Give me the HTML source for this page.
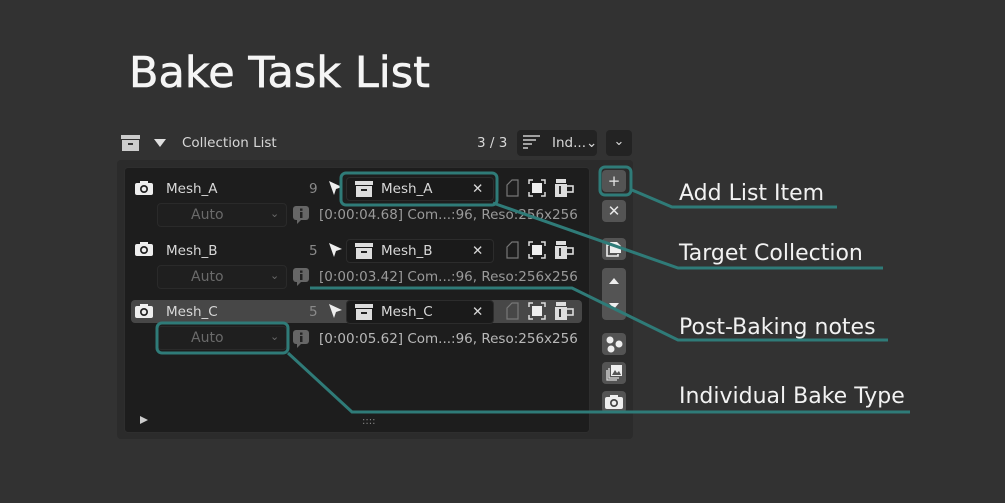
<!DOCTYPE html>
<html><head><meta charset="utf-8"><style>
*{margin:0;padding:0;box-sizing:border-box}
body{width:1005px;height:503px;background:#323232;position:relative;overflow:hidden;font-family:"DejaVu Sans","Liberation Sans",sans-serif;color:#ddd}
.a{position:absolute}
.t{font-size:13.5px;color:#d8d8d8;white-space:nowrap}
.g{color:#8a8a8a}
.btn{position:absolute;background:#545454;border-radius:4px;width:24px;height:22px;left:602px;color:#e6e6e6;font-size:15px;text-align:center;line-height:22px}
.fld{position:absolute;background:#1a1a1a;border-radius:4px;border:1px solid #2c2c2c}
.drop{position:absolute;border:1px solid #2a2a2a;border-radius:4px;background:#1f1f1f;width:130px;height:24px;left:157px;font-size:14px;color:#6a6a6a}
.ann{position:absolute;font-size:22px;color:#f2f2f2;white-space:nowrap;font-family:"DejaVu Sans",sans-serif}
</style></head><body>
<div class="a" style="left:129px;top:48px;font-size:43px;color:#f5f5f5;font-family:'DejaVu Sans',sans-serif;font-weight:500;-webkit-text-stroke:0.6px #f5f5f5">Bake Task List</div>

<div class="a" style="left:117px;top:160px;width:516px;height:279px;background:#2b2b2b;border-radius:4px"></div>
<div class="a" style="left:124px;top:167px;width:466px;height:266px;background:#1d1d1d;border-radius:4px;border:1px solid #2e2e2e"></div>

<!-- header -->
<svg class="a" style="left:120px;top:134px" width="22" height="18"><rect x="1" y="1" width="19" height="4" fill="#ccc"/><rect x="2" y="6" width="17" height="11" fill="#ccc"/><rect x="8" y="9" width="5" height="2" fill="#333"/></svg>
<svg class="a" style="left:153px;top:138px" width="14" height="10"><path d="M1 1H13L7 9Z" fill="#e0e0e0"/></svg>
<div class="a t" style="left:182px;top:135px">Collection List</div>
<div class="a t" style="left:477px;top:135px">3 / 3</div>
<div class="a" style="left:517px;top:130px;width:80px;height:26px;background:#232323;border-radius:4px"></div>
<svg class="a" style="left:522px;top:134px" width="22" height="18"><path d="M1 2H18M1 6H14M1 10H10M1 14H6" stroke="#ccc" stroke-width="1.5"/></svg>
<div class="a t" style="left:552px;top:135px">Ind...⌄</div>
<div class="a" style="left:606px;top:130px;width:26px;height:26px;background:#232323;border-radius:4px;color:#ddd;text-align:center;line-height:24px;font-size:13px">⌄</div>

<!-- rows -->
<div class="a" style="left:131px;top:300px;width:451px;height:23px;background:#474747;border-radius:4px"></div>

<svg class="a" style="left:135px;top:180px" width="20" height="16"><rect x="0" y="3" width="18" height="12" rx="2" fill="#eee"/><rect x="5" y="1" width="8" height="3" fill="#eee"/><circle cx="9" cy="9" r="4" fill="#222"/><circle cx="9" cy="9" r="2.3" fill="#eee"/></svg>
<div class="a t" style="left:166px;top:181px">Mesh_A</div>
<div class="a t g" style="left:309px;top:181px">9</div>
<div class="a t" style="left:166px;top:243px">Mesh_B</div>
<div class="a t g" style="left:309px;top:243px">5</div>
<div class="a t" style="left:166px;top:304px">Mesh_C</div>
<div class="a t g" style="left:309px;top:304px">5</div>

<div class="fld" style="left:346px;top:177px;width:148px;height:24px"></div>
<div class="fld" style="left:346px;top:239px;width:148px;height:24px"></div>
<div class="fld" style="left:346px;top:300px;width:148px;height:24px"></div>
<div class="a t" style="left:381px;top:181px">Mesh_A</div>
<div class="a t" style="left:381px;top:243px">Mesh_B</div>
<div class="a t" style="left:381px;top:304px">Mesh_C</div>
<div class="a t" style="left:472px;top:181px">✕</div>
<div class="a t" style="left:472px;top:243px">✕</div>
<div class="a t" style="left:472px;top:304px">✕</div>

<div class="drop" style="top:203px"><span class="a" style="left:33px;top:3px">Auto</span><span class="a" style="left:112px;top:3px;font-size:11px">⌄</span></div>
<div class="drop" style="top:265px"><span class="a" style="left:33px;top:3px">Auto</span><span class="a" style="left:112px;top:3px;font-size:11px">⌄</span></div>
<div class="drop" style="top:326px"><span class="a" style="left:33px;top:3px">Auto</span><span class="a" style="left:112px;top:3px;font-size:11px">⌄</span></div>

<div class="a t g" style="left:319px;top:207px;color:#9a9a9a">[0:00:04.68] Com...:96, Reso:256x256</div>
<div class="a t g" style="left:319px;top:269px;color:#9a9a9a">[0:00:03.42] Com...:96, Reso:256x256</div>
<div class="a t" style="left:319px;top:331px;color:#b8b8b8">[0:00:05.62] Com...:96, Reso:256x256</div>

<svg class="a" style="left:0;top:0" width="1005" height="503">
<defs>
<g id="cam"><rect x="0" y="3" width="18" height="12" rx="2" fill="#eee"/><rect x="5" y="1" width="8" height="3" fill="#eee"/><circle cx="9" cy="9" r="4" fill="#222"/><circle cx="9" cy="9" r="2.3" fill="#eee"/></g>
<g id="box"><rect x="0" y="0" width="18" height="4" fill="#ddd"/><rect x="1" y="5" width="16" height="11" fill="#ddd"/><rect x="6" y="8" width="6" height="2" fill="#222"/></g>
<g id="arr"><path d="M0 0L13 6L7 8L5 14Z" fill="#eee"/></g>
<g id="info"><rect x="0" y="0" width="16" height="14" rx="3" fill="#666"/><path d="M4 13L4 18L9 13Z" fill="#666"/><rect x="7" y="6" width="2.5" height="6" fill="#222"/><rect x="7" y="2.5" width="2.5" height="2.3" fill="#222"/></g>
<g id="ic3"><path d="M0 5L5 0H11V16H0Z" fill="none" stroke="#777" stroke-width="1.2"/>
<g transform="translate(22,0)"><path d="M0 4V0H4M12 0H16V4M16 12V16H12M4 16H0V12" stroke="#ddd" stroke-width="1.5" fill="none"/><rect x="3" y="3" width="10" height="10" fill="#eee"/></g>
<g transform="translate(48,-1)"><rect x="1" y="0" width="10" height="4" fill="#ddd"/><rect x="0" y="5" width="12" height="13" fill="#ddd"/><rect x="11" y="7" width="7" height="6" fill="none" stroke="#ddd" stroke-width="1.6"/><rect x="4" y="7" width="2" height="8" fill="#333"/></g></g>
</defs>
<use href="#cam" x="135" y="241"/><use href="#cam" x="135" y="303"/>
<use href="#box" x="355" y="181"/><use href="#box" x="355" y="243"/><use href="#box" x="355" y="304"/>
<use href="#arr" x="329" y="181"/><use href="#arr" x="329" y="243"/><use href="#arr" x="329" y="304"/>
<use href="#info" x="293" y="206"/><use href="#info" x="293" y="268"/><use href="#info" x="293" y="330"/>
<use href="#ic3" x="507" y="180"/><use href="#ic3" x="507" y="242"/><use href="#ic3" x="507" y="303"/>
<path d="M140 416L148 420L140 424Z" fill="#ccc"/>
<text x="362" y="424" font-size="10" fill="#888" font-family="DejaVu Sans">::::</text>
</svg>

<!-- side buttons -->
<div class="btn" style="top:170px">+</div>
<div class="btn" style="top:200px">✕</div>
<div class="btn" style="top:238px"></div>
<svg class="a" style="left:602px;top:238px" width="24" height="22"><path d="M7 7H5V18H16V16" stroke="#eee" stroke-width="1.6" fill="none"/><path d="M8 4H15L19 8V15H8Z" fill="#eee"/></svg>
<div class="btn" style="top:268px;height:52px;border-radius:4px"></div>
<svg class="a" style="left:602px;top:268px" width="24" height="52"><path d="M7 16H17L12 10Z" fill="#eee"/><path d="M7 35H17L12 41Z" fill="#eee"/></svg>
<div class="btn" style="top:333px"></div>
<svg class="a" style="left:602px;top:333px" width="24" height="22"><circle cx="8" cy="7" r="3.5" fill="#eee"/><circle cx="17" cy="11" r="3.5" fill="#eee"/><circle cx="9" cy="16" r="3.5" fill="#eee"/></svg>
<div class="btn" style="top:362px"></div>
<svg class="a" style="left:602px;top:362px" width="24" height="22"><rect x="9" y="3" width="11" height="11" fill="#eee"/><path d="M10 13L13 8L15 11L17 9L19 13Z" fill="#555"/><path d="M7 6V16H17M5 8V18H15" stroke="#ddd" fill="none" stroke-width="1.3"/></svg>
<div class="btn" style="top:391px"></div>
<svg class="a" style="left:605px;top:394px" width="20" height="16"><rect x="0" y="3" width="18" height="12" rx="2" fill="#eee"/><rect x="5" y="1" width="8" height="3" fill="#eee"/><circle cx="9" cy="9" r="4" fill="#444"/><circle cx="9" cy="9" r="2.3" fill="#eee"/></svg>

<!-- annotations -->
<svg class="a" style="left:0;top:0" width="1005" height="503" fill="none" stroke="#2f7b78" stroke-width="3">
<rect x="600" y="167" width="31" height="28" rx="5"/>
<rect x="341" y="173" width="156" height="32" rx="5"/>
<rect x="157" y="323" width="131" height="30" rx="5"/>
<path d="M632 190L672 207H837"/>
<path d="M493 203L678 268H883"/>
<path d="M310 288H572L678 340H888"/>
<path d="M288 353L352 412H910"/>
</svg>
<div class="ann" style="left:679px;top:181px">Add List Item</div>
<div class="ann" style="left:679px;top:241px">Target Collection</div>
<div class="ann" style="left:679px;top:315px">Post-Baking notes</div>
<div class="ann" style="left:679px;top:384px">Individual Bake Type</div>
</body></html>
